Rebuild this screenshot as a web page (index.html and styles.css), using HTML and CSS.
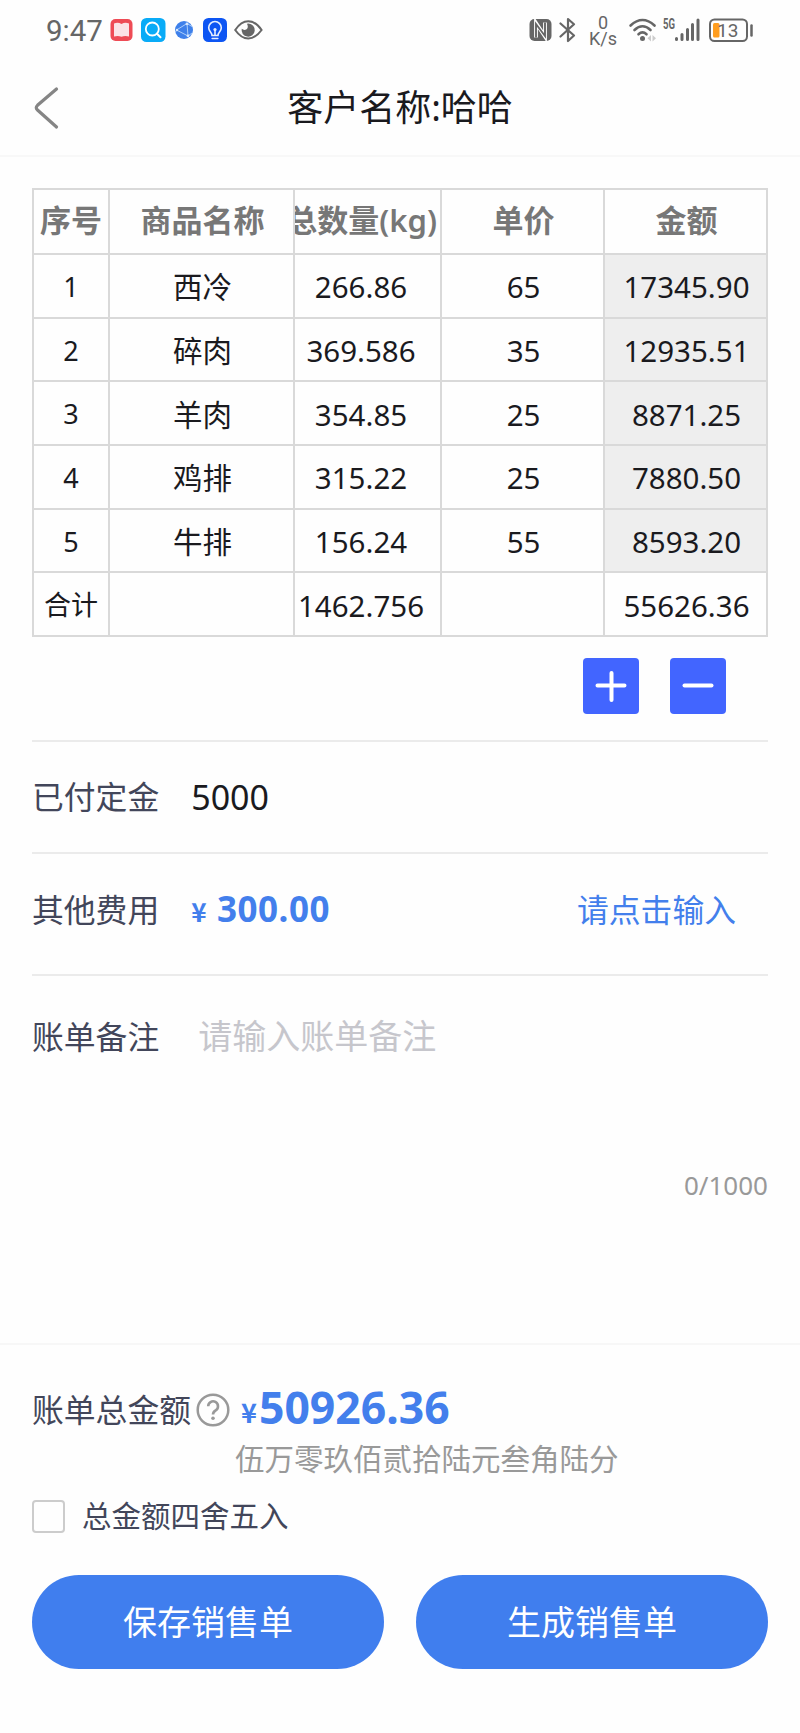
FILE: index.html
```html
<!DOCTYPE html>
<html lang="zh-CN">
<head>
  <meta charset="UTF-8" />
  <meta name="viewport" content="width=device-width, initial-scale=1.0"/>
  <title>客户名称:哈哈</title>
  <link rel="stylesheet" href="styles.css">
</head>
<body>
  <div class="status-bar">
    <span class="time">9:47</span>
    <div class="apps">
      <svg width="23" height="24" viewBox="0 0 23 24">
        <rect x="0.5" y="1" width="22" height="22" rx="5" fill="#ee4b55"/>
        <path d="M4 5.5q4-1.500 7.500.5q3.500-2 7.500-.5v13q-4-1-7.500.2q-3.500-1.200-7.500-.2z" fill="#fbe3e6"/>
      </svg>
      <svg width="25" height="24" viewBox="0 0 25 24">
        <rect width="24.500" height="24" rx="5.500" fill="#09abf7"/>
        <circle cx="11.300" cy="11" r="6.500" fill="none" stroke="#fff" stroke-width="1.800"/>
        <path d="M16 15.800l3.500 3.500" stroke="#fff" stroke-width="2" stroke-linecap="round"/>
      </svg>
      <svg class="globe" width="18" height="18" viewBox="0 0 18 18">
        <circle cx="9" cy="9" r="9" fill="#3e80ea"/>
        <path d="M1.500 9L12 2.500L13 15zM12 2.500l5 3M13 15l4-3M1.500 9L0 12" fill="none" stroke="#b9d6fa" stroke-width="0.900"/>
        <circle cx="2" cy="9" r="1.200" fill="#d8e8fd"/>
        <circle cx="12" cy="2.800" r="1.400" fill="#d8e8fd"/>
        <circle cx="13" cy="14.800" r="1.400" fill="#d8e8fd"/>
      </svg>
      <svg width="24" height="24" viewBox="0 0 24 24">
        <rect width="24" height="24" rx="5.500" fill="#0d55f3"/>
        <path d="M9 17.500c0-3-3.300-4-3.300-7.700a6.300 6.300 0 0 1 12.600 0c0 3.700-3.300 4.700-3.300 7.700zM9.200 20.500h5.600M12 17v-4.500" fill="none" stroke="#e6efff" stroke-width="1.600" stroke-linecap="round"/>
        <circle cx="12" cy="11.500" r="1.600" fill="#e6efff"/>
      </svg>
      <svg class="eye" width="29" height="20" viewBox="0 0 29 20">
        <path d="M1.200 10Q7 1.300 14.300 1.300T27.600 10Q21.500 18.500 14.300 18.500T1.200 10z" fill="none" stroke="#666" stroke-width="2"/>
        <path d="M14.500 3.500a6.600 6.600 0 1 1-6.800 5.300q2.500 2 4.900.4q2.200-1.800.4-5.400z" fill="#666"/>
      </svg>
    </div>

    <div class="signals">
      <svg width="23" height="24" viewBox="0 0 23 24">
        <rect x="0.500" y="1" width="22" height="22" rx="5" fill="#666"/>
        <path d="M7 19.500V5l9 13.500V4.500" fill="none" stroke="#fff" stroke-width="3.800"/>
        <path d="M7 19.500V6l9 12V4.500" fill="none" stroke="#666" stroke-width="1.900"/>
      </svg>
      <svg class="bluetooth" width="17" height="26" viewBox="0 0 17 26">
        <path d="M1.500 6.500L15 18.500L9 24V2l6 5.300L1.500 19.500" fill="none" stroke="#666" stroke-width="2.200" stroke-linejoin="round" stroke-linecap="round"/>
      </svg>
      <div class="speed"><span>0</span><span>K/s</span></div>
      <svg class="wifi" width="29" height="24" viewBox="0 0 29 24">
        <g fill="none" stroke="#666" stroke-width="2.600" stroke-linecap="round">
          <path d="M1.600 7.500Q13.500-3.500 25.500 7.500"/>
          <path d="M5.500 12Q13.500 4.500 21.500 12"/>
          <path d="M9.500 16.300Q13.500 12.500 17.500 16.300"/>
        </g>
        <circle cx="13.500" cy="20.500" r="2.500" fill="#666"/>
        <path d="M22 17l-3.500 3.200l3.500 3.200zM23.500 17l3.500 3.200l-3.500 3.200z" fill="#ccc"/>
      </svg>
      <svg class="cell" width="38" height="24" viewBox="0 0 38 24">
        <text x="1" y="11" textLength="12" lengthAdjust="spacingAndGlyphs" class="net">5G</text>
        <path d="M14.500 20.500v1M20 16.500v5M25.500 11.500v10M30.500 6.500v15M36 2v19.500" stroke="#666" stroke-width="3" stroke-linecap="round"/>
      </svg>
      <svg class="battery" width="45" height="24" viewBox="0 0 45 24">
        <rect x="1" y="1.500" width="37" height="21.500" rx="4.500" fill="none" stroke="#666" stroke-width="2"/>
        <rect x="4" y="5" width="6.500" height="14.500" rx="1.500" fill="#ff9d1e"/>
        <path d="M42.500 7.500v10" stroke="#666" stroke-width="2.500" stroke-linecap="round"/>
        <text x="8" y="18.700" class="level">13</text>
      </svg>
    </div>
  </div>

  <div class="header">
    <svg class="back" width="26" height="44" viewBox="0 0 26 44">
      <path d="M22.500 3L3.500 19.300Q1 21.700 3.500 24L22.500 41" fill="none" stroke="#858585" stroke-width="3.200" stroke-linecap="round"/>
    </svg>
    <h1 class="title">客户名称:哈哈</h1>
  </div>

  <div class="content">
    <table class="goods">
      <colgroup>
        <col class="c-no"><col class="c-name"><col class="c-qty"><col class="c-price"><col class="c-sum">
      </colgroup>
      <thead>
        <tr><th class="first">序号</th><th>商品名称</th><th><div class="clip">总数量(kg)</div></th><th>单价</th><th>金额</th></tr>
      </thead>
      <tbody>
        <tr><td class="no">1</td><td>西冷</td><td class="qty">266.86</td><td>65</td><td class="sum">17345.90</td></tr>
        <tr><td class="no">2</td><td>碎肉</td><td class="qty">369.586</td><td>35</td><td class="sum">12935.51</td></tr>
        <tr><td class="no">3</td><td>羊肉</td><td class="qty">354.85</td><td>25</td><td class="sum">8871.25</td></tr>
        <tr><td class="no">4</td><td>鸡排</td><td class="qty">315.22</td><td>25</td><td class="sum">7880.50</td></tr>
        <tr><td class="no">5</td><td>牛排</td><td class="qty">156.24</td><td>55</td><td class="sum">8593.20</td></tr>
        <tr><td class="no">合计</td><td></td><td class="qty">1462.756</td><td></td><td>55626.36</td></tr>
      </tbody>
    </table>

    <div class="tools">
      <button type="button" class="tool">
        <svg width="32" height="32" viewBox="0 0 32 32"><path d="M2.500 15.500h27M16.500 3v27" stroke="#fff" stroke-width="4" stroke-linecap="round"/></svg>
      </button>
      <button type="button" class="tool">
        <svg width="32" height="32" viewBox="0 0 32 32"><path d="M2.500 15.500h27" stroke="#fff" stroke-width="4" stroke-linecap="round"/></svg>
      </button>
    </div>

    <div class="row deposit">
      <span class="label">已付定金</span>
      <span class="value">5000</span>
    </div>
    <div class="row fee">
      <span class="label">其他费用</span>
      <span class="money"><small>¥</small>300.00</span>
      <a class="link">请点击输入</a>
    </div>
    <div class="row remark">
      <span class="label">账单备注</span>
      <span class="placeholder">请输入账单备注</span>
    </div>
    <div class="count">0/1000</div>
  </div>

  <div class="footer">
    <div class="total">
      <span class="label">账单总金额</span>
      <svg class="help" width="34" height="34" viewBox="0 0 34 34">
        <circle cx="17" cy="17" r="15.300" fill="none" stroke="#999" stroke-width="2.500"/>
        <path d="M12.200 13.300a4.900 4.900 0 1 1 7.500 4.100q-2.700 1.700-2.700 4" fill="none" stroke="#999" stroke-width="2.600"/>
        <circle cx="17" cy="25.300" r="1.800" fill="#999"/>
      </svg>
      <span class="yen">¥</span>
      <span class="amount">50926.36</span>
    </div>
    <div class="capital">伍万零玖佰贰拾陆元叁角陆分</div>
    <label class="round"><span class="box"></span>总金额四舍五入</label>
    <div class="actions">
      <button type="button" class="btn">保存销售单</button>
      <button type="button" class="btn">生成销售单</button>
    </div>
  </div>
</body>
</html>
```
FILE: styles.css
```css
* {
  box-sizing: border-box;
}

body {
  margin: 0;
  height: 1733px;
  display: flex;
  flex-direction: column;
  background: #fefefe;
  color: #1a1a1e;
  font-family: "Noto Sans", "Noto Sans CJK SC", sans-serif;
  overflow: hidden;
}

svg {
  display: block;
  flex: none;
}

button {
  font-family: inherit;
  border: none;
  padding: 0;
}

/* status bar */
.status-bar {
  height: 60px;
  padding: 0 46px 0 46px;
  display: flex;
  align-items: center;
  color: #666;
  font-family: Roboto, sans-serif;
}

.time {
  width: 64px;
  font-size: 29.5px;
  line-height: 58px;
  padding-top: 2px;
}

.apps, .signals {
  display: flex;
  align-items: center;
}

.apps {
  gap: 7.6px;
}

.globe {
  margin: 0 2px;
}

.signals {
  margin-left: auto;
}

.bluetooth {
  margin-left: 7px;
}

.speed {
  width: 26px;
  margin-left: 14px;
  display: flex;
  flex-direction: column;
  align-items: center;
  font-size: 18px;
  line-height: 16px;
  padding-top: 2px;
}

.wifi {
  margin-left: 13px;
}

.cell {
  margin-left: 4px;
  overflow: visible;
}

.battery {
  margin-left: 9px;
}

.net {
  font-size: 14px;
  font-weight: bold;
  fill: #666;
}

.level {
  font-size: 19px;
  fill: #666;
}

/* title bar */
.header {
  height: 97px;
  display: flex;
  align-items: center;
  border-bottom: 2px solid #f8f8f8;
  padding: 0 34px;
}

.title {
  flex: 1;
  margin: 0 26px 0 0;
  text-align: center;
  font-size: 36px;
  font-weight: normal;
  line-height: 50px;
}

.content {
  padding: 31px 32px 0;
  flex: 1;
}

/* goods table */
.goods {
  width: 736px;
  table-layout: fixed;
  border-collapse: collapse;
  text-align: center;
}

.c-no { width: 76px; }
.c-name { width: 185px; }
.c-qty { width: 147px; }
.c-price { width: 163px; }
.c-sum { width: 163px; }

.goods th, .goods td {
  border: 2px solid #d9d9d9;
  padding: 0;
  white-space: nowrap;
}

.goods th {
  height: 65px;
  padding: 0 0 3px 2px;
  color: #777;
  font-size: 31px;
  font-weight: 600;
  line-height: 40px;
}

.goods .first {
  padding-left: 0;
}

.goods td {
  height: 63.7px;
  padding: 3px 0 0 2px;
  font-size: 29.5px;
  line-height: 40px;
}

.goods .no {
  font-size: 27px;
  padding: 2px 0 0;
}

.goods .qty {
  padding-right: 13px;
  padding-left: 0;
}

.goods .sum {
  background: #eee;
}

.clip {
  display: flex;
  justify-content: flex-end;
  margin-left: -2px;
  padding-right: 3px;
  overflow: hidden;
}

.tools {
  display: flex;
  justify-content: flex-end;
  gap: 31px;
  padding: 21px 42.500px 26px 0;
}

.tool {
  width: 56px;
  height: 56px;
  display: flex;
  align-items: center;
  justify-content: center;
  background: #4265ff;
  border-radius: 4px;
}

/* form rows */
.row {
  display: flex;
  align-items: center;
  border-top: 2px solid #ebebeb;
}

.label {
  font-size: 31.8px;
  line-height: 46px;
  color: #42465a;
}

.deposit {
  height: 112px;
}

.value {
  margin-left: 32px;
  font-size: 34px;
}

.fee {
  height: 122px;
  padding: 0 32px 9px 0;
}

.money {
  margin-left: 32px;
  color: #437fec;
  font-size: 35px;
  font-weight: bold;
  line-height: 46px;
  letter-spacing: 0.5px;
}

.money small {
  font-family: "Noto Sans CJK SC", sans-serif;
  font-size: 26px;
  margin-right: 10px;
}

.link {
  margin-left: auto;
  font-size: 31.8px;
  line-height: 46px;
  color: #437fec;
}

.remark {
  height: 124px;
  padding-bottom: 1px;
}

.placeholder {
  margin-left: 39px;
  padding-bottom: 2px;
  font-size: 34px;
  line-height: 46px;
  color: #c6c6cc;
}

.count {
  margin-top: 69px;
  text-align: right;
  font-size: 26px;
  line-height: 36px;
  color: #999;
}

/* bottom panel */
.footer {
  height: 390px;
  border-top: 2px solid #f7f7f7;
  padding: 37px 32px 0;
}

.total {
  display: flex;
  align-items: center;
  height: 56px;
}

.help {
  margin-left: 5px;
}

.yen {
  margin-left: 11px;
  padding-top: 4px;
  color: #437fec;
  font-family: "Noto Sans CJK SC", sans-serif;
  font-size: 27px;
  font-weight: bold;
  line-height: 40px;
}

.amount {
  margin-left: 2px;
  padding-bottom: 7px;
  color: #437fec;
  font-size: 44.5px;
  font-weight: bold;
  line-height: 50px;
}

.capital {
  padding-left: 203px;
  font-size: 29.5px;
  line-height: 42px;
  color: #999;
}

.round {
  display: flex;
  align-items: center;
  margin-top: 15px;
  font-size: 29.5px;
  line-height: 42px;
  color: #42465a;
}

.box {
  width: 33px;
  height: 33px;
  margin-right: 17px;
  border: 2px solid #ccc;
  border-radius: 4px;
}

.actions {
  display: flex;
  gap: 32px;
  margin-top: 38px;
}

.btn {
  flex: 1;
  height: 94px;
  padding-bottom: 3px;
  border-radius: 47px;
  background: #407eee;
  color: #fff;
  font-size: 34px;
}
```
